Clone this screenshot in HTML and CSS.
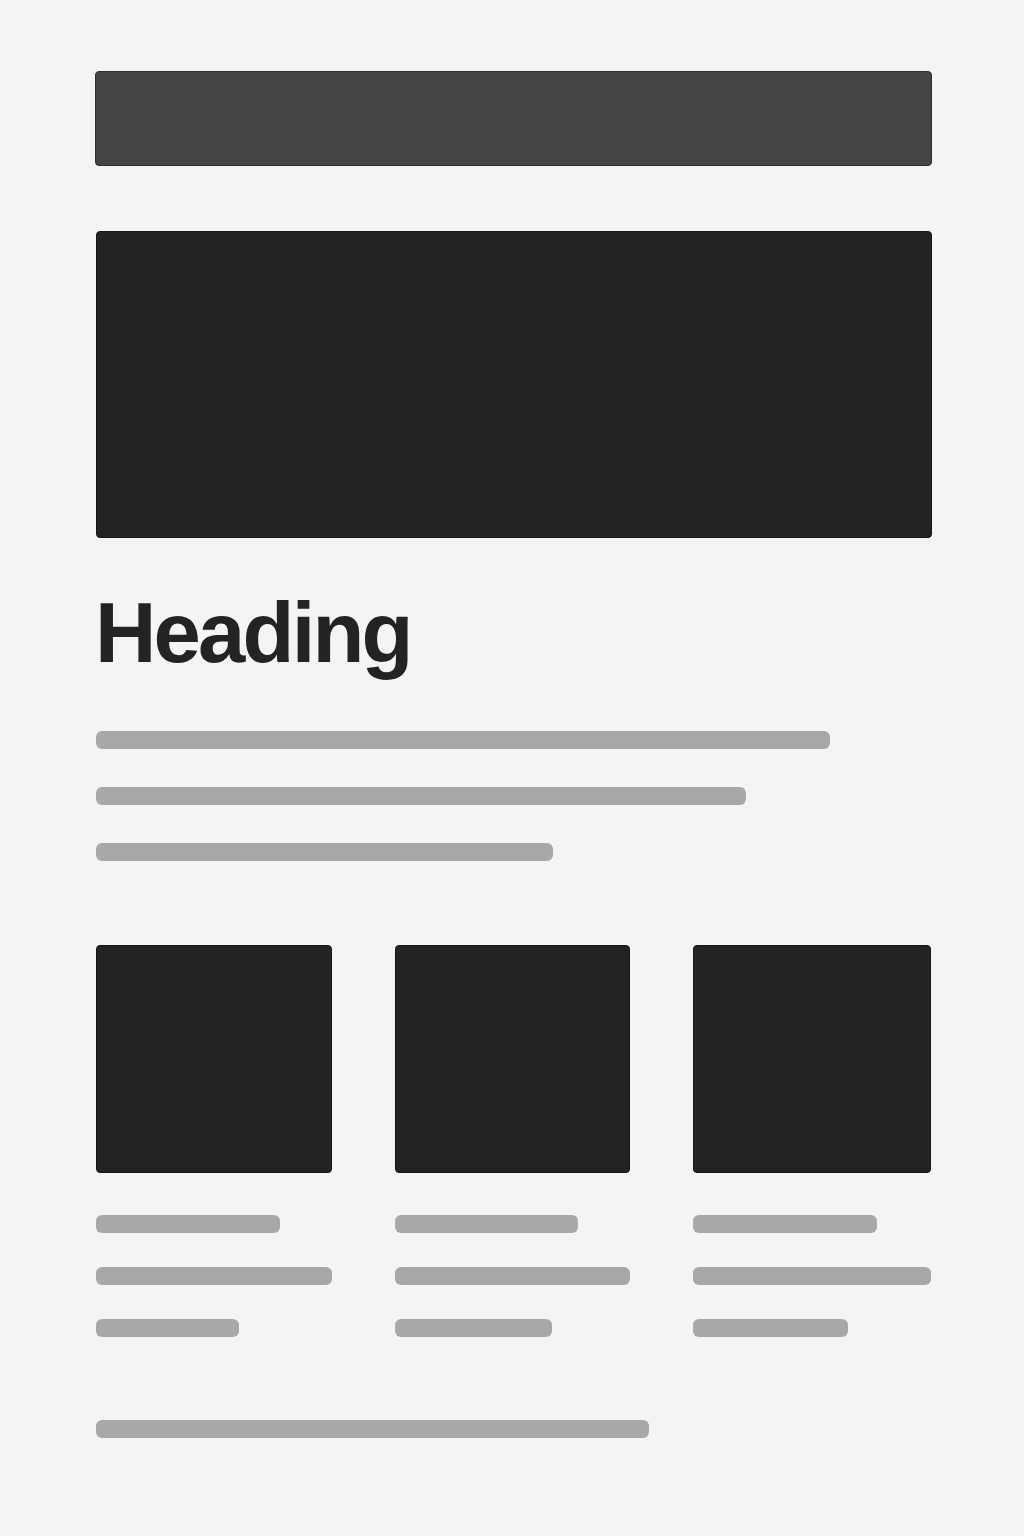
FILE: index.html
```html
<!DOCTYPE html>
<html lang="en">
<head>
  <meta charset="UTF-8" />
  <meta name="viewport" content="width=device-width, initial-scale=1.0"/>
  <title>Wireframe</title>
  <link rel="stylesheet" href="styles.css">
</head>
<body>

<div class="page">
  <header class="top-bar"></header>

  <div class="hero"></div>

  <h1 class="heading">Heading</h1>

  <div class="text-lines">
    <div class="line" style="width: 734px"></div>
    <div class="line" style="width: 650px"></div>
    <div class="line" style="width: 457px"></div>
  </div>

  <div class="cards">
    <div class="card">
      <div class="card-img"></div>
      <div class="card-lines">
        <div class="line" style="width: 184px"></div>
        <div class="line" style="width: 100%"></div>
        <div class="line" style="width: 143px"></div>
      </div>
    </div>
    <div class="card">
      <div class="card-img"></div>
      <div class="card-lines">
        <div class="line" style="width: 183px"></div>
        <div class="line" style="width: 100%"></div>
        <div class="line" style="width: 157px"></div>
      </div>
    </div>
    <div class="card">
      <div class="card-img"></div>
      <div class="card-lines">
        <div class="line" style="width: 184px"></div>
        <div class="line" style="width: 100%"></div>
        <div class="line" style="width: 155px"></div>
      </div>
    </div>
  </div>

  <footer class="footer">
    <div class="line" style="width: 553px"></div>
  </footer>
</div>

</body>
</html>
```

FILE: styles.css
```css
body {
  margin: 0;
  font-family: 'Liberation Sans', Arial, sans-serif;
  background: #f5f4f2;
  color: #232323;
}

.page {
  width: 837px;
  padding: 71px 0 0 95px;
}

.top-bar {
  height: 95px;
  background: #434446;
  border: 1px solid #2e2f30;
  border-radius: 4px;
  box-sizing: border-box;
  margin-bottom: 65px;
}

.hero {
  height: 307px;
  margin-left: 1px;
  background: #222325;
  border: 1px solid #161617;
  border-radius: 4px;
  box-sizing: border-box;
}

.heading {
  margin: 52px 0 56px;
  font-size: 85px;
  line-height: 1;
  font-weight: bold;
  letter-spacing: -2.8px;
}

.text-lines {
  display: flex;
  flex-direction: column;
  gap: 38px;
  padding-left: 1px;
}

.line {
  height: 18px;
  background: #a7a8a8;
  border-radius: 6px;
}

.cards {
  display: grid;
  grid-template-columns: 236px 235px 238px;
  column-gap: 63px;
  margin-top: 84px;
  padding-left: 1px;
}

.card-img {
  height: 228px;
  background: #222325;
  border: 1px solid #161617;
  border-radius: 4px;
  box-sizing: border-box;
}

.card-lines {
  display: flex;
  flex-direction: column;
  gap: 34px;
  margin-top: 42px;
}

.footer {
  margin-top: 83px;
  padding-left: 1px;
}
```
